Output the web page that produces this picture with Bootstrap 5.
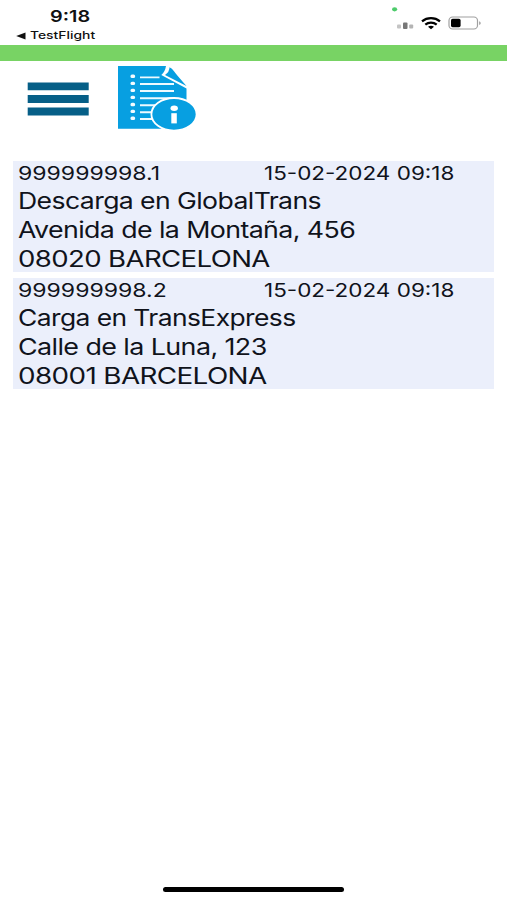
<!DOCTYPE html>
<html lang="es">
<head>
<meta charset="utf-8">
<meta name="viewport" content="width=device-width, initial-scale=1">
<title>Servicios</title>
<link href="https://cdn.jsdelivr.net/npm/bootstrap@5.3.0/dist/css/bootstrap.min.css" rel="stylesheet">
<style>
body{font-family:Inter,"Liberation Sans",sans-serif;color:#10131b;height:900px;overflow:hidden}
.status{height:45px;color:#111}
.clock{padding-left:50px;padding-top:7px;font-size:16px;line-height:18px;font-weight:600}
.back-app{padding-left:16px;padding-top:5px;font-size:10.5px;line-height:12px;font-weight:500;gap:4px}
.wide{display:inline-block;white-space:nowrap;transform-origin:0 50%;transform:scaleX(var(--sx,1.18))}
.status-icons{width:96px;height:36px;margin-right:20px}
.strip{height:16px;background:#78d364}
.tools{height:100px;padding:4px 0 0 27px}
.menu-btn{width:62px;height:34px;margin-top:17px}
.info-btn{width:80px;height:67px;margin-left:28px}
.stops{padding:0 13px;gap:6px}
.stop{height:111px;background:#ebeffb;padding-left:4.5px}
.head-line{font-size:18.5px;line-height:25px;height:25px}
.head-line .code{width:246px;--sx:1.245}
.head-line .date{--sx:1.215}
.text-line{font-size:22.5px;line-height:29px;height:29px;letter-spacing:-.5px}
.home{width:181px;height:5px;border-radius:3px;background:#000;margin-bottom:8px}
.s-clock{--sx:1.24}.s-app{--sx:1.32}
.s-company-1{--sx:1.182}.s-street-1{--sx:1.189}.s-city-1{--sx:1.225}
.s-company-2{--sx:1.175}.s-street-2{--sx:1.195}.s-city-2{--sx:1.237}
</style>
</head>
<body class="d-flex flex-column bg-white">
<header class="status d-flex justify-content-between flex-shrink-0">
  <div>
    <div class="clock"><span class="wide s-clock">9:18</span></div>
    <div class="back-app d-flex align-items-center">
      <svg width="10" height="8" viewBox="0 0 10 8"><path d="M.2 4 9.500 .5v7z" fill="#111"/></svg>
      <span class="wide s-app">TestFlight</span>
    </div>
  </div>
  <svg class="status-icons" viewBox="391 0 96 36">
    <ellipse cx="394.6" cy="9.3" rx="2.6" ry="2.1" fill="#4dcb6b"/>
    <rect x="397" y="24.5" width="4" height="4" rx="1" fill="#c4c4c4"/>
    <rect x="403" y="22.5" width="4.5" height="6.5" rx="1" fill="#777"/>
    <rect x="409.2" y="24.5" width="4" height="4" rx="1" fill="#b4b4b4"/>
    <g fill="none" stroke="#000" stroke-width="2.3">
      <path d="M422 21.3c5.2-4.2 12.8-4.2 18 0"/><path d="M425.3 24.6c3.3-2.6 8.1-2.6 11.4 0"/>
    </g>
    <path d="M428 26.7c1.8-1.3 4.2-1.3 6 0l-3 2.5z"/>
    <rect x="449" y="17" width="28.5" height="12" rx="3.6" fill="#fff" stroke="#a0a0a0" stroke-width="1.2"/>
    <rect x="451" y="18.8" width="9.6" height="8.4" rx="1.6"/>
    <path d="M479.2 21.2c2 .7 2 3.1 0 3.8z" fill="#999"/>
  </svg>
</header>
<div class="strip flex-shrink-0"></div>
<nav class="tools d-flex align-items-start flex-shrink-0">
  <svg class="menu-btn" viewBox="0 0 62 34"><path d="M.7.5h61v7.7h-61zM.7 13.1h61v7.8h-61zM.7 25.6h61v7.8h-61z" fill="#065f87"/></svg>
  <svg class="info-btn" viewBox="117 65 80 67">
    <path d="M118 66h48q-1 6-4.700 9L186.500 88.500V128.700H118z" fill="#079fe1"/>
    <path d="M169.500 67.300q2.500 1 4.500 4t12.500 14.700L165 75q4.500-3 4.500-7.700z" fill="#079fe1"/>
    <path d="M140 77.400h19.500M140 84h34M140 91h34M140 98.200h34M140 105.200h16M140 112.200h12M140 119h14" stroke="#eefaff" stroke-width="1.9"/>
    <g fill="#f2fbff"><rect x="130.500" y="74.600" width="4.600" height="3.400" rx="1.500"/><rect x="130.500" y="81.700" width="4.600" height="3.400" rx="1.500"/><rect x="130.500" y="88.700" width="4.600" height="3.400" rx="1.500"/><rect x="130.500" y="95.700" width="4.600" height="3.400" rx="1.500"/><rect x="130.500" y="102.800" width="4.600" height="3.400" rx="1.500"/><rect x="130.500" y="109.700" width="4.600" height="3.400" rx="1.500"/><rect x="130.500" y="116.500" width="4.600" height="3.400" rx="1.500"/></g>
    <ellipse cx="174" cy="114.300" rx="22.600" ry="16.300" fill="#079fe1" stroke="#fff" stroke-width="1.8"/>
    <ellipse cx="174.200" cy="108.300" rx="3.700" ry="2.700" fill="#fff"/>
    <path d="M171.300 113.200h5.500v10.200h-5.500z" fill="#fff"/>
  </svg>
</nav>
<main class="stops d-flex flex-column flex-grow-1">
  <article class="stop">
    <div class="head-line d-flex"><div class="code"><span class="wide">999999998.1</span></div><div class="date"><span class="wide">15-02-2024 09:18</span></div></div>
    <div class="text-line"><span class="wide s-company-1">Descarga en GlobalTrans</span></div>
    <div class="text-line"><span class="wide s-street-1">Avenida de la Montaña, 456</span></div>
    <div class="text-line"><span class="wide s-city-1">08020 BARCELONA</span></div>
  </article>
  <article class="stop">
    <div class="head-line d-flex"><div class="code"><span class="wide">999999998.2</span></div><div class="date"><span class="wide">15-02-2024 09:18</span></div></div>
    <div class="text-line"><span class="wide s-company-2">Carga en TransExpress</span></div>
    <div class="text-line"><span class="wide s-street-2">Calle de la Luna, 123</span></div>
    <div class="text-line"><span class="wide s-city-2">08001 BARCELONA</span></div>
  </article>
</main>
<footer class="home mx-auto flex-shrink-0"></footer>
<script src="https://cdn.jsdelivr.net/npm/bootstrap@5.3.0/dist/js/bootstrap.bundle.min.js"></script>
</body>
</html>
